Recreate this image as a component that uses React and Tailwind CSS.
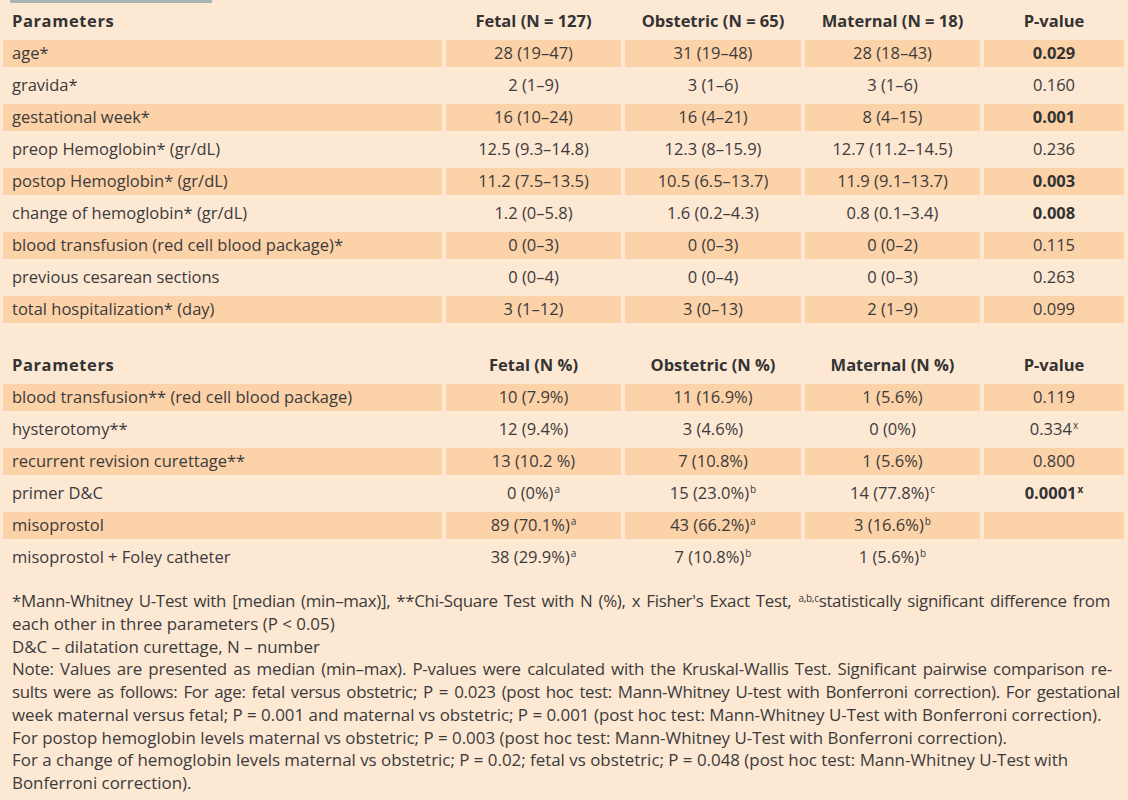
import React from "react";

const HL = "bg-[#fcd2a9]";

const Sup = ({ children }) => (
  <sup className="text-[10px] ml-[1px]">{children}</sup>
);

const rows1 = [
  ["age*", "28 (19–47)", "31 (19–48)", "28 (18–43)", "0.029", true, true],
  ["gravida*", "2 (1–9)", "3 (1–6)", "3 (1–6)", "0.160", false, false],
  ["gestational week*", "16 (10–24)", "16 (4–21)", "8 (4–15)", "0.001", true, true],
  ["preop Hemoglobin* (gr/dL)", "12.5 (9.3–14.8)", "12.3 (8–15.9)", "12.7 (11.2–14.5)", "0.236", false, false],
  ["postop Hemoglobin* (gr/dL)", "11.2 (7.5–13.5)", "10.5 (6.5–13.7)", "11.9 (9.1–13.7)", "0.003", true, true],
  ["change of hemoglobin* (gr/dL)", "1.2 (0–5.8)", "1.6 (0.2–4.3)", "0.8 (0.1–3.4)", "0.008", false, true],
  ["blood transfusion (red cell blood package)*", "0 (0–3)", "0 (0–3)", "0 (0–2)", "0.115", true, false],
  ["previous cesarean sections", "0 (0–4)", "0 (0–4)", "0 (0–3)", "0.263", false, false],
  ["total hospitalization* (day)", "3 (1–12)", "3 (0–13)", "2 (1–9)", "0.099", true, false],
];

const rows2 = [
  ["blood transfusion** (red cell blood package)", "10 (7.9%)", "11 (16.9%)", "1 (5.6%)", "0.119", true, false],
  ["hysterotomy**", "12 (9.4%)", "3 (4.6%)", "0 (0%)", <>0.334<Sup>x</Sup></>, false, false],
  ["recurrent revision curettage**", "13 (10.2 %)", "7 (10.8%)", "1 (5.6%)", "0.800", true, false],
  ["primer D&C", <>0 (0%)<Sup>a</Sup></>, <>15 (23.0%)<Sup>b</Sup></>, <>14 (77.8%)<Sup>c</Sup></>, <>0.0001<Sup>x</Sup></>, false, true],
  ["misoprostol", <>89 (70.1%)<Sup>a</Sup></>, <>43 (66.2%)<Sup>a</Sup></>, <>3 (16.6%)<Sup>b</Sup></>, "", true, false],
  ["misoprostol + Foley catheter", <>38 (29.9%)<Sup>a</Sup></>, <>7 (10.8%)<Sup>b</Sup></>, <>1 (5.6%)<Sup>b</Sup></>, "", false, false],
];

function Table({ header, rows }) {
  return (
    <div className="grid grid-cols-[439px_175px_176px_175px_140px] gap-x-[4px] gap-y-[5px] pl-[3px]">
      {header.map((h, i) => (
        <div
          key={"h" + i}
          className={
            "h-[27px] flex items-center font-bold text-[#333333] " +
            (i === 0 ? "justify-start pl-[9px] tracking-[0.6px]" : "justify-center")
          }
        >
          {h}
        </div>
      ))}
      {rows.map((r, ri) => {
        const hl = r[5];
        const bold = r[6];
        return (
          <React.Fragment key={ri}>
            {r.slice(0, 5).map((c, ci) => (
              <div
                key={ci}
                className={
                  "h-[27px] flex items-center whitespace-nowrap " +
                  (hl ? HL + " " : "") +
                  (ci === 0 ? "justify-start pl-[9px]" : "justify-center") +
                  (ci === 4 && bold ? " font-bold text-[#333333]" : "")
                }
              >
                {c}
              </div>
            ))}
          </React.Fragment>
        );
      })}
    </div>
  );
}

export default function App() {
  return (
    <div className="w-[1128px] h-[800px] overflow-hidden bg-[#fde8d4] text-[#3b3b3b] font-['Open_Sans','Noto_Sans',sans-serif] text-[16.5px]">
      <div className="ml-[10px] w-[202px] h-[3px] bg-[#a7b6b5]" />
      <div className="mt-[5px]">
        <Table
          header={["Parameters", "Fetal (N = 127)", "Obstetric (N = 65)", "Maternal (N = 18)", "P-value"]}
          rows={rows1}
        />
      </div>
      <div className="mt-[29px]">
        <Table
          header={["Parameters", "Fetal (N %)", "Obstetric (N %)", "Maternal (N %)", "P-value"]}
          rows={rows2}
        />
      </div>
      <div className="mt-[19px] pl-[12px] w-[1122px] leading-[22.75px] text-[16.9px]">
        <div className="whitespace-nowrap text-justify [text-align-last:justify] tracking-[-0.3px] pr-[12px]">
          *Mann-Whitney U-Test with [median (min–max)], **Chi-Square Test with N (%), x Fisher's Exact Test, <Sup>a,b,c</Sup>statistically significant difference from
        </div>
        <div className="whitespace-nowrap">each other in three parameters (P &lt; 0.05)</div>
        <div className="whitespace-nowrap">D&amp;C – dilatation curettage, N – number</div>
        <div className="whitespace-nowrap text-justify [text-align-last:justify] pr-[10px] tracking-[-0.2px]">
          Note: Values are presented as median (min–max). P-values were calculated with the Kruskal-Wallis Test. Significant pairwise comparison re-
        </div>
        <div className="whitespace-nowrap text-justify [text-align-last:justify] tracking-[-0.3px] pr-[2px]">
          sults were as follows: For age: fetal versus obstetric; P = 0.023 (post hoc test: Mann-Whitney U-test with Bonferroni correction). For gestational
        </div>
        <div className="whitespace-nowrap">
          week maternal versus fetal; P = 0.001 and maternal vs obstetric; P = 0.001 (post hoc test: Mann-Whitney U-Test with Bonferroni correction).
        </div>
        <div className="whitespace-nowrap">
          For postop hemoglobin levels maternal vs obstetric; P = 0.003 (post hoc test: Mann-Whitney U-Test with Bonferroni correction).
        </div>
        <div className="whitespace-nowrap">
          For a change of hemoglobin levels maternal vs obstetric; P = 0.02; fetal vs obstetric; P = 0.048 (post hoc test: Mann-Whitney U-Test with
        </div>
        <div className="whitespace-nowrap">Bonferroni correction).</div>
      </div>
    </div>
  );
}
